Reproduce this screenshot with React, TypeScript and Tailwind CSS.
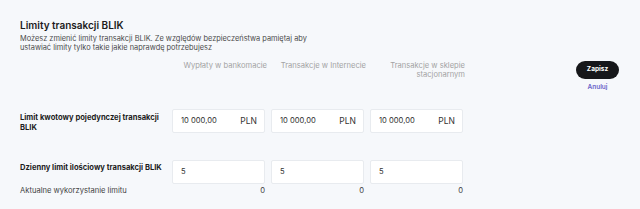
import { useState } from 'react';

const columns = ['Wypłaty w bankomacie', 'Transakcje w Internecie', 'Transakcje w sklepie stacjonarnym'];

const App = () => {
  const [amounts, setAmounts] = useState(['10 000,00', '10 000,00', '10 000,00']);
  const [counts, setCounts] = useState(['5', '5', '5']);
  const usage = [0, 0, 0];

  return (
    <div className="min-h-screen bg-[#f6f8fb] font-['Inter',sans-serif] text-[#1c1c1c]">
      <div className="flex pl-5 pr-[21px] pt-[18px]">
        <div className="flex-1">
          <h1 className="text-[10px] leading-[14px] font-semibold">Limity transakcji BLIK</h1>
          <p className="mt-[2px] w-[300px] text-[7.4px] leading-[9px] text-[#4a4a4a]">
            Możesz zmienić limity transakcji BLIK. Ze względów bezpieczeństwa pamiętaj aby ustawiać limity tylko takie jakie naprawdę potrzebujesz
          </p>

          <div className="mt-[9px] grid grid-cols-[146px_93px_93px_93px] gap-x-[6px]">
            {/* NAGŁÓWKI */}
            <div />
            {columns.map(c => (
              <div key={c} className="-mr-[2px] h-[48px] text-right text-[7.6px] leading-[9px] text-[#a3a3a3]">
                {c}
              </div>
            ))}

            {/* LIMIT KWOTOWY */}
            <div className="pt-[4px] text-[7.6px] leading-[9.5px] font-bold">
              Limit kwotowy pojedynczej transakcji BLIK
            </div>
            {amounts.map((a, i) => (
              <div key={i} className="flex h-[24px] items-center rounded-[2px] border border-[#e8ebef] bg-white pl-[8px] pr-[7px]">
                <input
                  value={a}
                  onChange={e => setAmounts(amounts.map((v, j) => (j === i ? e.target.value : v)))}
                  className="w-full min-w-0 bg-transparent text-[7.6px] text-[#333] outline-none"
                />
                <span className="text-[8.5px] text-[#333]">PLN</span>
              </div>
            ))}

            {/* LIMIT ILOŚCIOWY */}
            <div className="mt-[27px] pt-[3px] text-[7.6px] leading-[9.5px] font-bold whitespace-nowrap">
              Dzienny limit ilościowy transakcji BLIK
            </div>
            {counts.map((c, i) => (
              <div key={i} className="mt-[27px] flex h-[24px] items-center rounded-[2px] border border-[#e8ebef] bg-white pl-[8px] pr-[7px]">
                <input
                  value={c}
                  onChange={e => setCounts(counts.map((v, j) => (j === i ? e.target.value : v)))}
                  className="w-full min-w-0 bg-transparent text-[7.6px] text-[#333] outline-none"
                />
              </div>
            ))}

            <div className="mt-[2px] text-[7.6px] leading-[10px] text-[#444]">Aktualne wykorzystanie limitu</div>
            {usage.map((u, i) => (
              <div key={i} className="mt-[2px] text-right text-[7.6px] leading-[10px] text-[#444]">
                {u}
              </div>
            ))}
          </div>
        </div>

        {/* PRZYCISKI */}
        <div className="flex flex-col items-center pt-[43px]">
          <button className="h-[18px] w-[43px] rounded-full bg-[#16171a] text-[6.5px] font-bold text-white">Zapisz</button>
          <button className="mt-[4px] text-[6.5px] font-semibold text-[#6a63c8]">Anuluj</button>
        </div>
      </div>
    </div>
  );
};

export default App;
